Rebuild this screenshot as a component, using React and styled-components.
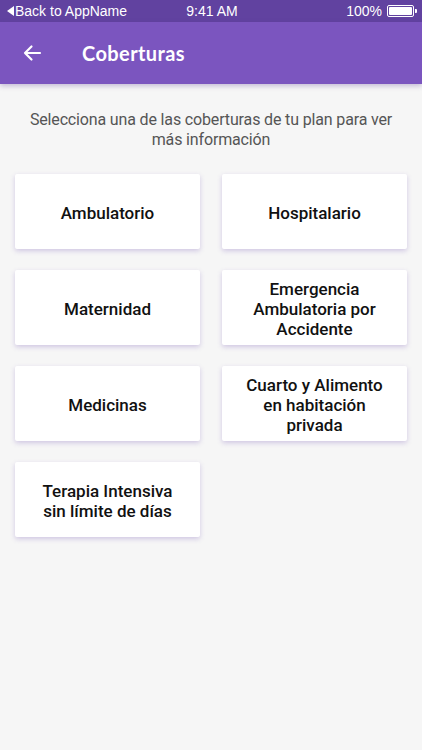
import React from "react";
import styled, { createGlobalStyle } from "styled-components";

const GlobalStyle = createGlobalStyle`
  html, body {
    margin: 0;
    padding: 0;
    background: #f6f6f6;
  }
  body {
    font-family: Roboto, "Liberation Sans", sans-serif;
  }
`;

const coverages = [
  "Ambulatorio",
  "Hospitalario",
  "Maternidad",
  "Emergencia Ambulatoria por Accidente",
  "Medicinas",
  "Cuarto y Alimento en habitación privada",
  "Terapia Intensiva sin límite de días",
];

const Screen = styled.div`
  width: 422px;
  min-height: 750px;
  background: #f6f6f6;
`;

const StatusBar = styled.div`
  height: 22px;
  background: #6142a0;
  color: #fff;
  display: grid;
  grid-template-columns: 1fr auto 1fr;
  align-items: center;
  padding: 0 5px 0 7px;
  font-family: "Liberation Sans", Arial, sans-serif;
  font-size: 14px;
`;

const StatusLeft = styled.div`
  display: flex;
  align-items: center;
  gap: 1px;
`;

const StatusRight = styled.div`
  display: flex;
  align-items: center;
  justify-content: flex-end;
  gap: 5px;
`;

const Battery = styled.div`
  width: 23px;
  height: 8px;
  border: 1px solid #fff;
  border-radius: 2px;
  padding: 1px;
  position: relative;
  margin-right: 3px;
  &::before {
    content: "";
    display: block;
    width: 100%;
    height: 100%;
    background: #fff;
    border-radius: 1px;
  }
  &::after {
    content: "";
    position: absolute;
    right: -4px;
    top: 3px;
    width: 2px;
    height: 4px;
    background: #fff;
    border-radius: 0 1px 1px 0;
  }
`;

const Header = styled.header`
  height: 62px;
  background: #7b55bf;
  display: flex;
  align-items: center;
  padding-left: 22px;
  box-shadow: 0 2px 5px rgba(80, 50, 140, 0.3);
`;

const BackButton = styled.button`
  border: none;
  background: none;
  padding: 0;
  width: 20px;
  height: 20px;
  display: flex;
  align-items: center;
  justify-content: center;
  margin-right: 40px;
  cursor: pointer;
`;

const Title = styled.h1`
  margin: 0;
  color: #fff;
  font-family: Lato, "Open Sans", sans-serif;
  font-size: 20px;
  font-weight: 700;
  letter-spacing: 0.4px;
`;

const Intro = styled.p`
  margin: 26px 22px 0;
  text-align: center;
  color: #555;
  font-size: 16px;
  line-height: 20px;
  letter-spacing: -0.15px;
`;

const Grid = styled.div`
  display: grid;
  grid-template-columns: 185px 185px;
  column-gap: 22px;
  row-gap: 21px;
  padding: 24px 15px 0;
`;

const Card = styled.button`
  height: 75px;
  background: #fff;
  border: none;
  border-radius: 2px;
  box-shadow: 0 2px 5px rgba(110, 80, 180, 0.28);
  display: flex;
  align-items: center;
  justify-content: center;
  padding: 2px 22px 0;
  font-family: Roboto, "Liberation Sans", sans-serif;
  font-size: 17px;
  font-weight: 500;
  line-height: 20px;
  color: #111;
  text-align: center;
  cursor: pointer;
`;

export default function App() {
  return (
    <Screen>
      <GlobalStyle />
      <StatusBar>
        <StatusLeft>
          <svg width="7" height="10" viewBox="0 0 7 10">
            <path d="M7 0 L0 5 L7 10 Z" fill="#fff" />
          </svg>
          <span>Back to AppName</span>
        </StatusLeft>
        <span>9:41 AM</span>
        <StatusRight>
          <span>100%</span>
          <Battery />
        </StatusRight>
      </StatusBar>
      <Header>
        <BackButton aria-label="Volver">
          <svg width="20" height="20" viewBox="0 0 20 20" fill="none">
            <path
              d="M18 10 H3 M9.5 3.5 L3 10 L9.5 16.5"
              stroke="#fff"
              strokeWidth="2.2"
              strokeLinecap="round"
              strokeLinejoin="round"
            />
          </svg>
        </BackButton>
        <Title>Coberturas</Title>
      </Header>
      <Intro>
        Selecciona una de las coberturas de tu plan para ver más información
      </Intro>
      <Grid>
        {coverages.map((c) => (
          <Card key={c}>{c}</Card>
        ))}
      </Grid>
    </Screen>
  );
}
